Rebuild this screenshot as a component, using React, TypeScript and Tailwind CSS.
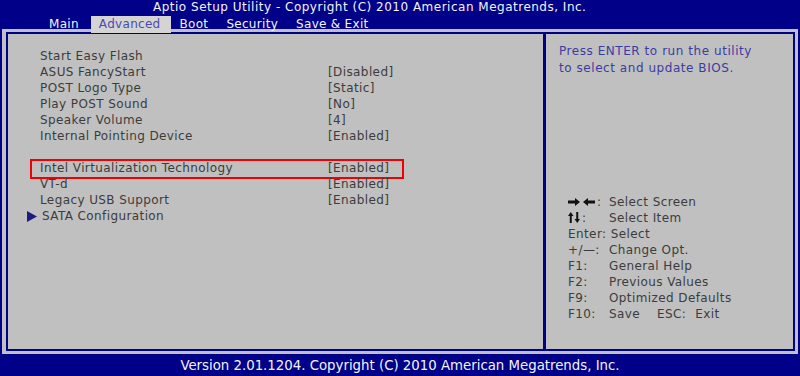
import React from 'react';

const items: { label: string; value?: string; gap?: boolean; marked?: boolean; sub?: boolean }[] = [
  { label: 'Start Easy Flash' },
  { label: 'ASUS FancyStart', value: '[Disabled]' },
  { label: 'POST Logo Type', value: '[Static]' },
  { label: 'Play POST Sound', value: '[No]' },
  { label: 'Speaker Volume', value: '[4]' },
  { label: 'Internal Pointing Device', value: '[Enabled]' },
  { label: '', gap: true },
  { label: 'Intel Virtualization Technology', value: '[Enabled]', marked: true },
  { label: 'VT-d', value: '[Enabled]' },
  { label: 'Legacy USB Support', value: '[Enabled]' },
  { label: 'SATA Configuration', sub: true },
];

const tabs = ['Main', 'Advanced', 'Boot', 'Security', 'Save & Exit'];

const RightLeft = () => (
  <svg width="28" height="8" viewBox="0 0 28 8" className="block">
    <path d="M0 2.5h7V0l5 4-5 4V5.5H0z" fill="#111" />
    <path d="M27 2.5h-7V0l-5 4 5 4V5.5h7z" fill="#111" />
  </svg>
);

const UpDown = () => (
  <svg width="12" height="11" viewBox="0 0 12 11" className="block">
    <path d="M2.75 0L5.5 4H3.75V11h-2V4H0z" fill="#111" />
    <path d="M9.25 11L6.5 7h1.75V0h2v7H12z" fill="#111" />
  </svg>
);

const legend: { key: React.ReactNode; text: React.ReactNode }[] = [
  { key: <span className="flex items-center gap-[1px]"><RightLeft /><span>:</span></span>, text: 'Select Screen' },
  { key: <span className="flex items-center gap-[2px]"><UpDown /><span>:</span></span>, text: 'Select Item' },
  { key: null, text: null },
  { key: '+/—:', text: 'Change Opt.' },
  { key: 'F1:', text: 'General Help' },
  { key: 'F2:', text: 'Previous Values' },
  { key: 'F9:', text: 'Optimized Defaults' },
  { key: 'F10:', text: <span>Save<span className="ml-[17px]">ESC:</span><span className="ml-[9px]">Exit</span></span> },
];

export default function App() {
  return (
    <div
      className="w-[800px] h-[376px] bg-[#000088] flex flex-col overflow-hidden text-[12px]"
      style={{ fontFamily: '"DejaVu Sans", Verdana, sans-serif' }}
    >
      {/* header */}
      <div className="h-[29px] relative z-10 text-[#f4f4f4]">
        <div className="h-[16px] leading-[15px] pl-[153px] tracking-[0.5px]">
          Aptio Setup Utility - Copyright (C) 2010 American Megatrends, Inc.
        </div>
        <div className="flex h-[17px] leading-[17px] pl-[40px] tracking-[0.3px]">
          {tabs.map(t => (
            <div
              key={t}
              className={
                t === 'Advanced'
                  ? 'pl-[8px] pr-[10px] bg-[#d4d4d4] text-[#4a4ab0]'
                  : t === 'Main'
                  ? 'pl-[9px] pr-[12px]'
                  : 'px-[9px]'
              }
            >
              {t}
            </div>
          ))}
        </div>
      </div>

      {/* frame */}
      <div className="mx-[2px] h-[328px] bg-[#c0c0c0] pl-[4px] pr-[3px] py-[3px] flex">
        <div className="flex-1 flex border-2 border-[#000088] bg-[#c0c0c0]">
          {/* left panel */}
          <div className="w-[535px] pt-[14px] pl-[32px] text-[#3c3c3c] tracking-[0.4px]">
            {items.map((it, i) =>
              it.gap ? (
                <div key={i} className="h-[16px]" />
              ) : (
                <div key={i} className="relative flex h-[16px] leading-[16px]">
                  {it.sub && (
                    <svg width="10" height="11" viewBox="0 0 10 11" className="absolute left-[-13px] top-[3px]">
                      <path d="M0 0L10 5.5 0 11z" fill="#1c1c80" />
                    </svg>
                  )}
                  <div className={it.sub ? 'w-[288px] pl-[2px]' : 'w-[288px]'}>{it.label}</div>
                  {it.value && <div>{it.value}</div>}
                  {it.marked && (
                    <div className="absolute left-[-10px] top-[-1px] w-[374px] h-[20px] border-[2.5px] border-[#f00000]" />
                  )}
                </div>
              )
            )}
          </div>

          {/* right panel */}
          <div className="flex-1 border-l-[3px] border-[#000088] flex flex-col pb-[27px] tracking-[0.4px]">
            <div className="pl-[13px] pt-[9px] text-[#3c3ca0] leading-[17px] tracking-[0.55px]">
              <div>Press ENTER to run the utility</div>
              <div>to select and update BIOS.</div>
            </div>
            <div className="mt-auto pl-[22px] text-[#3c3c3c]">
              {legend.map((l, i) =>
                l.key === null ? (
                  <div key={i} className="h-[16px] leading-[16px]">Enter: Select</div>
                ) : (
                  <div key={i} className="flex h-[16px] leading-[16px] items-center">
                    <div className="w-[41px] flex items-center">{l.key}</div>
                    <div>{l.text}</div>
                  </div>
                )
              )}
            </div>
          </div>
        </div>
      </div>

      {/* footer */}
      <div
        className="flex-1 flex items-center justify-center text-[#f4f4f4] text-[14.8px] font-stretch-condensed"
        style={{ fontFamily: '"DejaVu Sans Condensed", "DejaVu Sans", sans-serif' }}
      >
        Version 2.01.1204. Copyright (C) 2010 American Megatrends, Inc.
      </div>
    </div>
  );
}
